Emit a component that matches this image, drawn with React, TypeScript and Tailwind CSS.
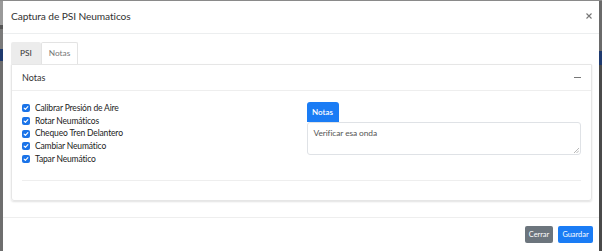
import React from "react";

const items = [
  "Calibrar Presión de Aire",
  "Rotar Neumáticos",
  "Chequeo Tren Delantero",
  "Cambiar Neumático",
  "Tapar Neumático",
];

const Check = () => (
  <span className="w-[8px] h-[8px] rounded-[2px] bg-[#1a73e8] flex items-center justify-center shrink-0">
    <svg width="6" height="6" viewBox="0 0 8 8">
      <path d="M1.5 4.2 L3.2 5.8 L6.5 2.2" stroke="white" strokeWidth="1.5" fill="none" strokeLinecap="round" strokeLinejoin="round" />
    </svg>
  </span>
);

const App = () => {
  return (
    <div className="w-[602px] h-[251px] flex bg-[#8a8a8a] pt-px font-['Lato',sans-serif] text-[#333]">
      <div className="w-[3px] flex flex-col">
        <div className="h-[24px] bg-[#9a9a9a]" />
        <div className="h-[4px] bg-[#555]" />
        <div className="h-[20px] bg-[#7a7a7a]" />
        <div className="h-[12px] bg-[#1f3a6e]" />
        <div className="flex-1 bg-[#6e6e6e]" />
      </div>
      <div className="flex-1 bg-white flex flex-col">
        <div className="h-[33px] border-b border-[#eceeef] flex items-center justify-between pl-[8px] pr-[7px]">
          <span className="text-[10.2px] text-[#333] tracking-[-0.1px]">Captura de PSI Neumaticos</span>
          <svg width="6" height="6" viewBox="0 0 6 6" className="-mt-[3px]">
            <path d="M0.5 0.5 L5.5 5.5 M5.5 0.5 L0.5 5.5" stroke="#777" strokeWidth="1.1" />
          </svg>
        </div>
        <div className="pl-[8px] pr-[7px] pt-[8px] pb-[16px]">
          <div className="flex h-[22px] text-[8.3px]">
            <div className="w-[30px] bg-[#ececec] flex items-center justify-center text-[#333] rounded-t-[2px]">PSI</div>
            <div className="w-[37px] bg-white border border-b-0 border-[#e3e3e3] flex items-center justify-center text-[#777] rounded-t-[2px]">Notas</div>
          </div>
          <div className="border border-[#e6e6e6] rounded-b-[3px] shadow-[0_1px_2px_rgba(0,0,0,0.12)] h-[137px] flex flex-col">
            <div className="h-[26px] border-b border-[#eeeeee] flex items-center justify-between pl-[10px] pr-[10px]">
              <span className="text-[9px] text-[#333]">Notas</span>
              <span className="w-[7px] h-px bg-[#777]" />
            </div>
            <div className="px-[10px] pt-[11px]">
              <div className="grid grid-cols-2 gap-[10px]">
                <div className="flex flex-col">
                  {items.map((t) => (
                    <div key={t} className="flex items-center gap-[5px] h-[12.7px] text-[8.5px] tracking-[-0.15px] text-[#222]">
                      <Check />
                      <span>{t}</span>
                    </div>
                  ))}
                </div>
                <div className="flex flex-col">
                  <div className="w-[32px] h-[20px] bg-[#1a7cf5] text-white text-[8px] font-semibold flex items-center justify-center rounded-t-[3px]">Notas</div>
                  <div className="relative h-[33px] border border-[#dfe2e6] rounded-[3px] px-[6px] pt-[4px] text-[8.4px] tracking-[-0.1px] text-[#555]">
                    Verificar esa onda
                    <svg className="absolute right-[1px] bottom-[1px]" width="5" height="5" viewBox="0 0 5 5">
                      <path d="M5 0 L0 5 M5 2.5 L2.5 5" stroke="#999" strokeWidth="0.7" />
                    </svg>
                  </div>
                </div>
              </div>
              <div className="mt-[15px] border-t border-[#eeeeee]" />
            </div>
          </div>
        </div>
        <div className="border-t border-[#eeeeee] flex-1 flex justify-end items-start pt-[8px] pr-[6px] gap-[5px]">
          <div className="w-[28px] h-[17px] bg-[#6c757d] text-white text-[7.4px] rounded-[2px] flex items-center justify-center">Cerrar</div>
          <div className="w-[35px] h-[17px] bg-[#1a7cf5] text-white text-[7.4px] rounded-[2px] flex items-center justify-center">Guardar</div>
        </div>
      </div>
      <div className="w-[3px] flex flex-col">
        <div className="h-[50px] bg-[#6a6a6a]" />
        <div className="h-[14px] bg-[#1f3a6e]" />
        <div className="flex-1 bg-[#4a4a4a]" />
      </div>
    </div>
  );
};

export default App;
